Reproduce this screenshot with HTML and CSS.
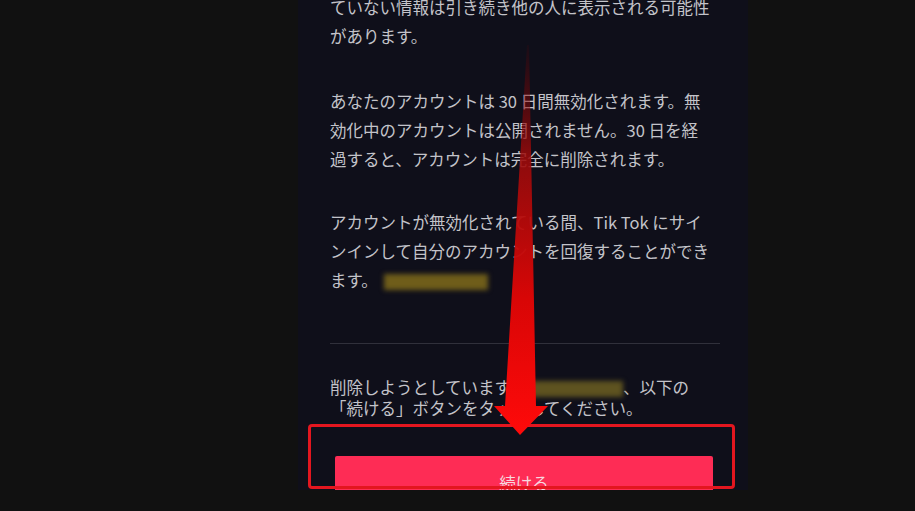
FILE: index.html
```html
<!DOCTYPE html>
<html lang="ja">
<head>
<meta charset="utf-8">
<title>アカウント削除</title>
<link rel="stylesheet" href="styles.css">
</head>
<body>
<div class="panel">
  <div class="content">
    <p class="para">ていない情報は引き続き他の人に表示される可能性<br>があります。</p>
    <p class="para gap36">あなたのアカウントは 30 日間無効化されます。無<br>効化中のアカウントは公開されません。30 日を経<br>過すると、アカウントは完全に削除されます。</p>
    <p class="para gap34">アカウントが無効化されている間、Tik Tok にサイ<br>ンインして自分のアカウントを回復することができ<br>ます。<span class="blur blur-a"></span></p>
    <div class="divider"></div>
    <p class="para tight">削除しようとしています<span class="blur blur-b"></span>、以下の<br>「続ける」ボタンをタップしてください。</p>
    <button class="btn">続ける</button>
  </div>
  <div class="highlight"></div>
  <svg class="arrow" width="450" height="490" viewBox="0 0 450 490" xmlns="http://www.w3.org/2000/svg">
    <defs>
      <linearGradient id="ag" x1="0" y1="45" x2="0" y2="435" gradientUnits="userSpaceOnUse">
        <stop offset="0" stop-color="#7a0000" stop-opacity="0.1"/>
        <stop offset="0.3" stop-color="#9e0b0b" stop-opacity="0.9"/>
        <stop offset="0.65" stop-color="#d80606"/>
        <stop offset="1" stop-color="#ff0a0a"/>
      </linearGradient>
    </defs>
    <polygon points="229,45 231,45 238,406 250,406 222,435 196,406 207,406" fill="url(#ag)"/>
  </svg>
</div>
</body>
</html>
```
FILE: styles.css
```css
html, body {
  margin: 0;
  padding: 0;
  background: #111111;
  height: 511px;
  overflow: hidden;
}
body {
  font-family: "Noto Sans CJK JP", "Noto Sans", sans-serif;
}
.panel {
  position: relative;
  margin-left: 298px;
  width: 450px;
  height: 490px;
  background: #0f0f1a;
  overflow: hidden;
}
.content {
  margin-top: -7.5px;
  padding: 0 30px 0 32px;
}
.para {
  margin: 0;
  font-size: 16.5px;
  line-height: 29px;
  color: #c3c3c9;
  white-space: nowrap;
}
.gap36 { margin-top: 36px; }
.gap34 { margin-top: 34px; }
.tight {
  margin-top: 33.5px;
  line-height: 21px;
}
.divider {
  margin-top: 48px;
  width: 390px;
  height: 1px;
  background: #30303b;
}
.blur {
  display: inline-block;
  height: 16px;
  vertical-align: -3px;
  filter: blur(2.5px);
}
.blur-a {
  width: 104px;
  margin-left: 6px;
  background: #6f5d1a;
}
.blur-b {
  width: 96px;
  margin-left: 16px;
  background: #5e5320;
}
.btn {
  display: block;
  margin: 36.5px 0 0 5px;
  width: 378px;
  height: 54px;
  border: 0;
  border-radius: 2px;
  background: #fe2c55;
  color: #f6d8de;
  font-family: "Noto Sans CJK JP", sans-serif;
  font-size: 16.5px;
  padding: 0;
}
.highlight {
  position: absolute;
  left: 10px;
  top: 424px;
  width: 427px;
  height: 65px;
  box-sizing: border-box;
  border: 3px solid #e3161f;
  border-radius: 4px;
}
.arrow {
  position: absolute;
  left: 0;
  top: 0;
}
```
